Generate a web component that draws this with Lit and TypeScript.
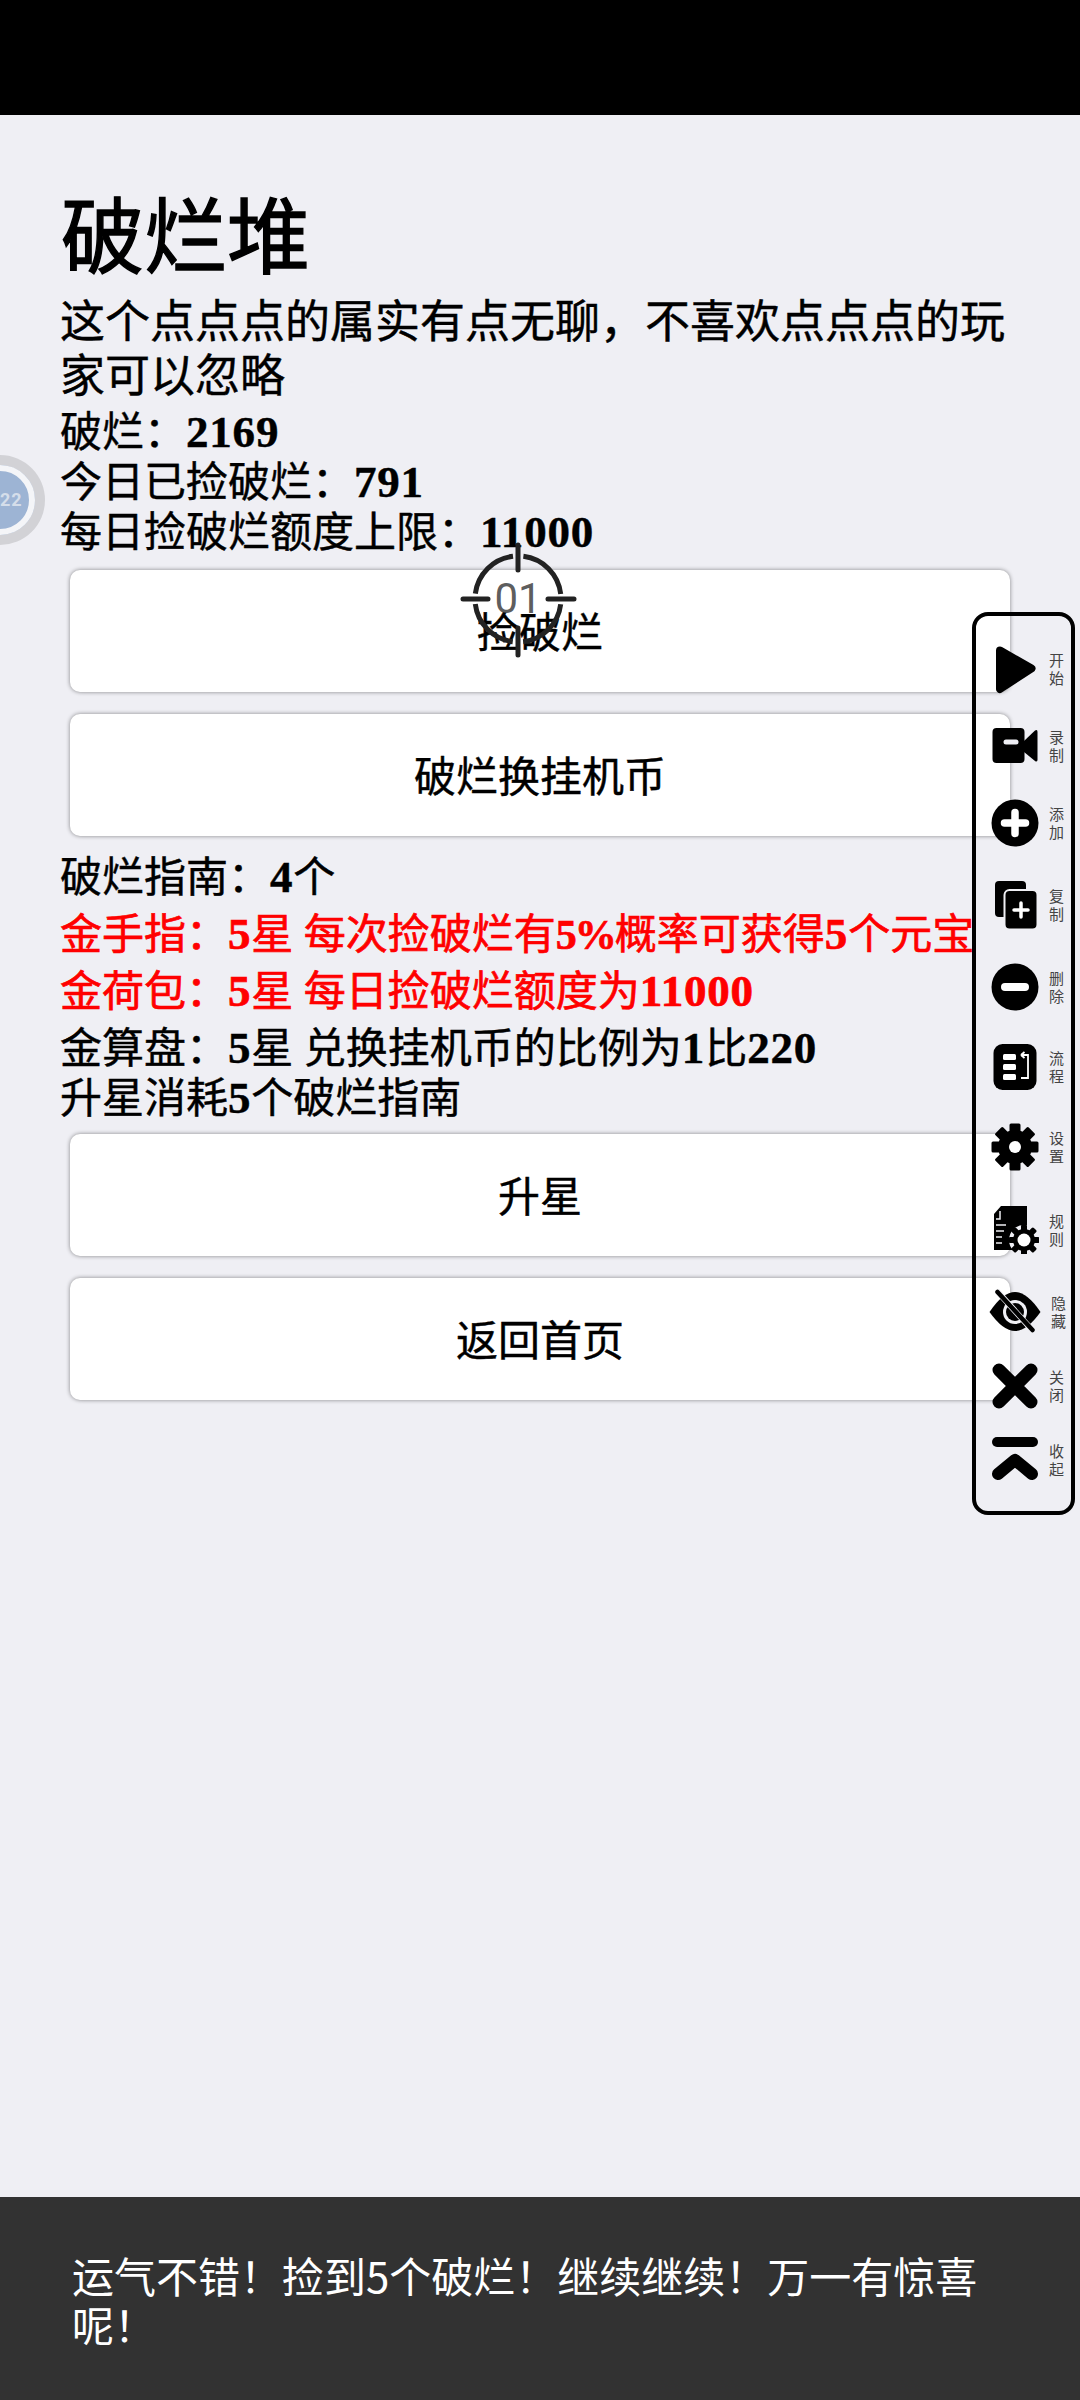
import { LitElement, html, css } from "lit";
import { customElement } from "lit/decorators.js";

const gearTeeth = (cx: number, cy: number, w: number, h: number, fill = "#000") =>
  [0, 45, 90, 135].map(
    (a) => html`<svg x="0" y="0" width="48" height="48" viewBox="0 0 48 48"><rect x=${cx - w / 2} y=${cy - h / 2} width=${w} height=${h} rx="1.5" fill=${fill} transform="rotate(${a} ${cx} ${cy})"></rect></svg>`
  );

const icons: Record<string, unknown> = {
  play: html`<svg class="ic" viewBox="0 0 48 48"><path d="M9 5.5 L40.5 23.5 L9 44 Z" fill="#000" stroke="#000" stroke-width="8" stroke-linejoin="round"></path></svg>`,
  rec: html`<svg class="ic" viewBox="0 0 48 48"><rect x="1.5" y="6" width="32" height="35" rx="4" fill="#000"></rect><path d="M33 19 L44 8.5 Q46.5 7 46.5 10 V37.5 Q46.5 40.5 44 39 L33 30 Z" fill="#000"></path><rect x="12.5" y="17.5" width="15" height="5" rx="2.5" fill="#efeff4"></rect></svg>`,
  add: html`<svg class="ic" viewBox="0 0 48 48"><circle cx="24" cy="24" r="23.5" fill="#000"></circle><path d="M24 13.5 V34.5 M13.5 24 H34.5" stroke="#fff" stroke-width="7.5" stroke-linecap="round"></path></svg>`,
  copy: html`<svg class="ic" viewBox="0 0 48 48"><rect x="4" y="0" width="31" height="36" rx="4" fill="#000"></rect><rect x="13.5" y="9" width="33" height="39.5" rx="5" fill="#000" stroke="#efeff4" stroke-width="2"></rect><path d="M30 22 V36 M23 29 H37" stroke="#fff" stroke-width="3.5" stroke-linecap="round"></path></svg>`,
  del: html`<svg class="ic" viewBox="0 0 48 48"><circle cx="24" cy="24" r="23.5" fill="#000"></circle><rect x="10" y="20" width="28" height="8" rx="4" fill="#fff"></rect></svg>`,
  flow: html`<svg class="ic" viewBox="0 0 48 48"><rect x="2.5" y="1" width="43" height="46" rx="9" fill="#000"></rect><rect x="12" y="11" width="13" height="6" rx="1.5" fill="#fff"></rect><rect x="12" y="21" width="13" height="6" rx="1.5" fill="#fff"></rect><rect x="12" y="31" width="13" height="6" rx="1.5" fill="#fff"></rect><path d="M30 12 L33.5 9 M30 12 L33.5 15 M30 12 H37 V35 H30" fill="none" stroke="#fff" stroke-width="1.8"></path></svg>`,
  gear: html`<svg class="ic" viewBox="0 0 48 48"><circle cx="24" cy="24" r="17" fill="#000"></circle>${gearTeeth(24, 24, 11, 47)}<circle cx="24" cy="24" r="6" fill="#fff"></circle></svg>`,
  rule: html`<svg class="ic" viewBox="0 0 48 48"><path d="M10 0 H36 V44 H3 V8 Z" fill="#000"></path><path d="M5 13 H9 V5" fill="none" stroke="#efeff4" stroke-width="1.5"></path><path d="M5 19 H15 M5 25 H13 M5 31 H11 M5 37 H11" stroke="#efeff4" stroke-width="1.6"></path><circle cx="33" cy="34" r="15" fill="#efeff4"></circle><circle cx="33" cy="34" r="11" fill="#000"></circle>${gearTeeth(33, 34, 6, 31)}<circle cx="33" cy="34" r="6.5" fill="#fff"></circle></svg>`,
  hide: html`<svg class="ic" viewBox="0 0 52 48" style="width:52px;margin-left:-2px"><path d="M0.5 24 Q14 4 26 4 Q38 4 51.5 24 Q38 43 26 43 Q14 43 0.5 24 Z" fill="#000"></path><circle cx="26" cy="24" r="12" fill="#efeff4"></circle><circle cx="26" cy="24" r="9" fill="#000"></circle><path d="M8 3 L44 43" stroke="#efeff4" stroke-width="6"></path><path d="M8.5 4 L43.5 42" stroke="#000" stroke-width="4.5" stroke-linecap="round"></path></svg>`,
  close: html`<svg class="ic" viewBox="0 0 48 48"><path d="M8 8 L40 40 M40 8 L8 40" stroke="#000" stroke-width="13" stroke-linecap="round"></path></svg>`,
  fold: html`<svg class="ic" viewBox="0 0 48 48"><path d="M6 6 H42" stroke="#000" stroke-width="10" stroke-linecap="round"></path><path d="M7 38 L24 24 L41 38" fill="none" stroke="#000" stroke-width="12" stroke-linecap="round" stroke-linejoin="round"></path></svg>`,
};

const tools: [string, string, number][] = [
  ["play", "开始", 80], ["rec", "录制", 74], ["add", "添加", 80], ["copy", "复制", 84], ["del", "删除", 80], ["flow", "流程", 80],
  ["gear", "设置", 80], ["rule", "规则", 86], ["hide", "隐藏", 78], ["close", "关闭", 70], ["fold", "收起", 78],
];

@customElement("app-root")
export class AppRoot extends LitElement {
  static styles = css`
    :host {
      display: block;
      position: relative;
      width: 1080px;
      height: 2400px;
      overflow: hidden;
      background: #efeff4;
      color: #000;
      font-family: "Liberation Serif", "Noto Sans CJK SC", serif;
      font-size: 42px;
    }
    .status { height: 115px; background: #000; }
    .main { padding: 74px 0 0 60px; -webkit-text-stroke: 0.45px currentColor; }
    h1 { margin: 0 0 0 1px; font-size: 83px; line-height: 100px; font-weight: 400; -webkit-text-stroke: 1.4px #000; }
    .desc { width: 960px; font-size: 45px; line-height: 54px; margin-top: 7px; }
    .line { line-height: 49px; white-space: nowrap; }
    .stats { margin-top: 4px; }
    .num { font-weight: 700; font-size: 45px; letter-spacing: 0.8px; }
    .num.pct { font-size: 42px; letter-spacing: -2px; }
    .red { color: #f00; -webkit-text-stroke: 0.7px #f00; }
    .guide { margin: 5px 0 -2px; }
    .guide .line { margin-bottom: 7px; }
    .guide .line.tight { margin-bottom: 0; }
    .btns { display: flex; flex-direction: column; gap: 22px; margin: 0 0 0 10px; width: 940px; padding: 12px 0; }
    .btn {
      height: 122px; box-sizing: border-box; padding-bottom: 4px; display: flex; align-items: center; justify-content: center;
      background: #fff; border-radius: 10px;
      box-shadow: 0 0 4px rgba(0, 0, 0, 0.45);
      font-family: "Noto Sans CJK SC", sans-serif; font-size: 42px;
    }
    .panel {
      position: absolute; left: 972px; top: 612px; width: 103px; height: 903px; box-sizing: border-box;
      border: 4px solid #000; border-radius: 16px; padding: 13px 0 0 15px;
      display: flex; flex-direction: column;
    }
    .tool { display: flex; align-items: center; gap: 10px; }
    .ic { width: 48px; height: 48px; flex: none; display: block; overflow: visible; }
    .tool span {
      width: 15px; font: 15px/18px "Noto Sans CJK SC", sans-serif; color: #444; text-align: center;
    }
    .aim { position: absolute; left: 458px; top: 539px; width: 120px; height: 120px; }
    .aim svg { position: absolute; inset: 0; width: 120px; height: 120px; }
    .aim b {
      position: absolute; left: 0; right: 0; top: 35px; text-align: center; font: 400 42px/50px Roboto, sans-serif; color: rgba(50, 50, 50, 0.8);
    }
    .ball { position: absolute; left: -45px; top: 455px; width: 90px; height: 90px; }
    .ball svg { width: 90px; height: 90px; display: block; }
    .ball i {
      position: absolute; left: 45px; top: 33px; font: 700 18px/24px Roboto, sans-serif; color: #d5deea; font-style: normal; letter-spacing: 1px;
    }
    .toast {
      position: absolute; left: 0; right: 0; bottom: 0; height: 203px; box-sizing: border-box;
      background: #323232; color: #fff; padding: 53px 90px 0 72px;
      font: 42px/49px "Noto Sans CJK SC", sans-serif;
    }
  `;

  render() {
    return html`
      <div class="status"></div>
      <div class="main">
        <h1>破烂堆</h1>
        <div class="desc">这个点点点的属实有点无聊，不喜欢点点点的玩家可以忽略</div>
        <div class="stats">
          <div class="line">破烂：<span class="num">2169</span></div>
          <div class="line">今日已捡破烂：<span class="num">791</span></div>
          <div class="line">每日捡破烂额度上限：<span class="num">11000</span></div>
        </div>
        <div class="btns">
          <div class="btn">捡破烂</div>
          <div class="btn">破烂换挂机币</div>
        </div>
        <div class="guide">
          <div class="line">破烂指南：<span class="num">4</span>个</div>
          <div class="line red">金手指：<span class="num">5</span>星 每次捡破烂有<span class="num pct">5%</span>概率可获得<span class="num">5</span>个元宝</div>
          <div class="line red">金荷包：<span class="num">5</span>星 每日捡破烂额度为<span class="num">11000</span></div>
          <div class="line tight">金算盘：<span class="num">5</span>星 兑换挂机币的比例为<span class="num">1</span>比<span class="num">220</span></div>
          <div class="line tight">升星消耗<span class="num">5</span>个破烂指南</div>
        </div>
        <div class="btns">
          <div class="btn">升星</div>
          <div class="btn">返回首页</div>
        </div>
      </div>

      <div class="ball">
        <svg viewBox="0 0 90 90">
          <circle cx="45" cy="45" r="45" fill="#d2d2d6"></circle>
          <circle cx="45" cy="45" r="35" fill="#9db4d4"></circle>
          <circle cx="45" cy="45" r="32" fill="none" stroke="#f4f5f8" stroke-width="6" stroke-dasharray="90 6 105"></circle>
        </svg>
        <i>22</i>
      </div>

      <div class="aim">
        <svg viewBox="0 0 120 120">
          <circle cx="60" cy="60" r="43" fill="none" stroke="#222" stroke-width="5" stroke-dasharray="57 10.5" stroke-dashoffset="-5.25"></circle>
          <path d="M60 6 V31 M60 89 V116 M5 60 H30 M90 60 H116" stroke="#222" stroke-width="5" stroke-linecap="round"></path>
        </svg>
        <b>01</b>
      </div>

      <div class="panel">
        ${tools.map(([k, t, h]) => html`<div class="tool" style="height:${h}px">${icons[k]}<span>${t}</span></div>`)}
      </div>

      <div class="toast">运气不错！捡到5个破烂！继续继续！万一有惊喜呢！</div>
    `;
  }
}
